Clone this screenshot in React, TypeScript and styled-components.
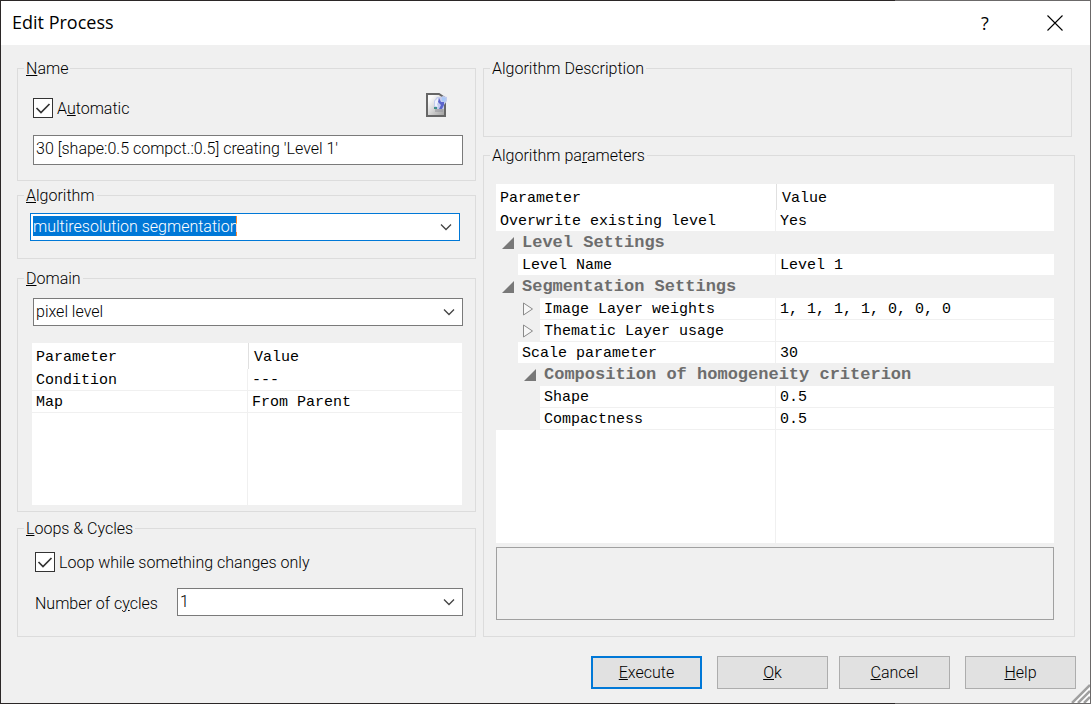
import React, { useState } from "react";
import styled, { createGlobalStyle } from "styled-components";

const GlobalStyle = createGlobalStyle`
  * { box-sizing: border-box; }
  body {
    margin: 0;
    background: #f0f0f0;
    color: #000;
    font: 300 16px/20px Roboto, "Liberation Sans", sans-serif;
  }
`;

const Frame = styled.div`
  min-height: 100vh;
  padding: 1px;
  display: flex;
  background: linear-gradient(90deg, #2b2727 82%, #6b6969 82%);
`;

const Dialog = styled.main`
  flex: 1;
  min-width: 0;
  display: flex;
  flex-direction: column;
  position: relative;
  background: #f0f0f0;
`;

const TitleBar = styled.header`
  display: flex;
  align-items: center;
  height: 44px;
  padding-left: 11px;
  background: #fff;
`;

const Title = styled.h1`
  flex: 1;
  margin: 0;
  padding-bottom: 2px;
  font: 400 18px/24px "Open Sans", "Noto Sans", sans-serif;
`;

const CaptionButton = styled.button`
  display: flex;
  align-items: center;
  justify-content: center;
  width: 70px;
  height: 44px;
  padding: 0 0 1px;
  border: 0;
  background: transparent;
  color: #000;
  font: 400 18px/24px "Open Sans", "Noto Sans", sans-serif;
`;

const Columns = styled.div`
  flex: 1;
  display: grid;
  grid-template-columns: 459fr 592fr;
  gap: 7px;
  padding: 13px 15px 0 16px;
`;

const Column = styled.div`
  min-width: 0;
  display: flex;
  flex-direction: column;
`;

const Group = styled.fieldset<{ $gap?: number; $inset?: number }>`
  min-width: 0;
  margin: 0 ${(p) => p.$inset ?? 0}px ${(p) => p.$gap ?? 0}px 0;
  padding: 0;
  border: 1px solid #dcdcdc;
`;

const Legend = styled.legend`
  height: 20px;
  margin-left: 6px;
  padding: 0 2px;
  line-height: 22px;
`;

const GroupBody = styled.div<{ $pad: string }>`
  padding: ${(p) => p.$pad};
`;

const NameRow = styled.div`
  display: flex;
  align-items: flex-end;
  justify-content: space-between;
  height: 25px;
  margin-bottom: 17px;
  padding-right: 15px;
`;

const CheckLabel = styled.label`
  display: flex;
  align-items: center;
  gap: 4px;
`;

const CheckText = styled.span`
  padding-top: 2px;
  line-height: 18px;
`;

const CheckBox = styled.input`
  appearance: none;
  flex: none;
  width: 20px;
  height: 20px;
  margin: 0;
  border: 1px solid #333;
  background: #fff;
  &:checked {
    background: #fff
      url("data:image/svg+xml,%3Csvg xmlns='http://www.w3.org/2000/svg' viewBox='0 0 18 18'%3E%3Cpath d='M2.5 9l4.5 4.5L15.500 5' fill='none' stroke='%23333' stroke-width='1.700'/%3E%3C/svg%3E")
      center / 18px 18px;
  }
`;

const IconButton = styled.button`
  display: flex;
  padding: 0;
  border: 0;
  background: transparent;
`;

const TextBox = styled.input`
  display: block;
  width: 100%;
  height: 30px;
  padding: 0 2px 3px;
  border: 1px solid #7a7a7a;
  border-radius: 0;
  background: #fff;
  color: #000;
  font: inherit;
  outline: 0;
`;

const Combo = styled.div`
  position: relative;
  flex: 1;
  min-width: 0;
`;

const Select = styled.select<{ $active?: boolean }>`
  appearance: none;
  display: block;
  width: 100%;
  height: 28px;
  padding: 0 28px 0 2px;
  border: 1px solid ${(p) => (p.$active ? "#0078d7" : "#7a7a7a")};
  border-radius: 0;
  color: ${(p) => (p.$active ? "#fff" : "#000")};
  background: ${(p) =>
    p.$active
      ? "linear-gradient(90deg, #0078d7 203px, #ff8728 203px) 2px 2px / 204px 20px no-repeat #fff"
      : "#fff"};
  font: inherit;
  outline: 0;
`;

const Chevron = styled.svg`
  position: absolute;
  right: 8px;
  top: 10px;
  pointer-events: none;
`;

const CyclesRow = styled.div`
  display: flex;
  align-items: center;
  margin-top: 16px;
`;

const CyclesLabel = styled.label`
  width: 142px;
  padding-top: 3px;
`;

const DomainTable = styled.div`
  margin: 17px 1px 0 -1px;
`;

const Grid = styled.table`
  width: 100%;
  table-layout: fixed;
  border-collapse: separate;
  border-spacing: 0;
  background: #fff;
  font: 400 15px/22px "Liberation Mono", monospace;
  white-space: nowrap;
`;

const NameCol = styled.col<{ $width: number }>`
  width: ${(p) => p.$width}px;
`;

const HeadCell = styled.th`
  height: 26px;
  padding: 4px 0 0 4px;
  font-weight: 400;
  text-align: left;
  & + & {
    padding-left: 5px;
    border-left: 1px solid #e0e0e0;
  }
`;

const Cell = styled.td<{ $indent?: number }>`
  height: 22px;
  padding: 0 0 0 ${(p) => (p.$indent ?? 0) * 22}px;
  background: #f0f0f0;
  border-bottom: 1px solid #f0f0f0;
  position: relative;
`;

const CellText = styled.div<{ $first?: boolean }>`
  height: 21px;
  padding-left: 4px;
  background: #fff;
  border-right: ${(p) => (p.$first ? "1px solid #f0f0f0" : "0")};
  line-height: 23px;
`;

const GroupCell = styled.td<{ $indent: number }>`
  height: 22px;
  padding: 0 0 0 ${(p) => p.$indent * 22 + 6}px;
  background: #f0f0f0;
  color: #6d6d6d;
  font-size: 17px;
  font-weight: 700;
`;

const GroupLine = styled.div`
  display: flex;
  align-items: center;
  gap: 8px;
`;

const Arrow = styled.svg`
  position: absolute;
  left: 27px;
  top: 4px;
`;

const FillCell = styled.td<{ $height: number; $first?: boolean }>`
  height: ${(p) => p.$height}px;
  padding: 0;
  border-right: ${(p) => (p.$first ? "1px solid #f0f0f0" : "0")};
`;

const InfoBox = styled.div`
  height: 73px;
  margin-top: 4px;
  border: 1px solid #a0a0a0;
`;

const Footer = styled.footer`
  display: flex;
  justify-content: flex-end;
  gap: 15px;
  padding: 18px 14px 14px;
`;

const ButtonPair = styled.div`
  display: flex;
  gap: 11px;
`;

const Button = styled.button<{ $primary?: boolean }>`
  width: 111px;
  height: 33px;
  padding: 1px 0 0;
  border: ${(p) => (p.$primary ? "2px solid #0078d7" : "1px solid #adadad")};
  border-radius: 0;
  background: #e1e1e1;
  color: #000;
  font: inherit;
`;

const Grip = styled.svg`
  position: absolute;
  right: 0;
  bottom: 0;
`;

interface ComboBoxProps {
  value: string;
  label: string;
  id?: string;
  active?: boolean;
}

function ComboBox({ value, label, id, active }: ComboBoxProps) {
  return (
    <Combo>
      <Select id={id} aria-label={label} defaultValue={value} $active={active}>
        <option value={value}>{value}</option>
      </Select>
      <Chevron width="12" height="8" viewBox="0 0 12 8">
        <path d="M1 1.500l5 5 5-5" fill="none" stroke="#444" strokeWidth="1.300" />
      </Chevron>
    </Combo>
  );
}

interface ParamRow {
  name: string;
  value?: string;
  indent?: number;
  group?: boolean;
  arrow?: boolean;
}

interface ParamTableProps {
  rows: ParamRow[];
  nameWidth: number;
  fill: number;
}

function ParamTable({ rows, nameWidth, fill }: ParamTableProps) {
  return (
    <Grid>
      <colgroup>
        <NameCol $width={nameWidth} />
        <col />
      </colgroup>
      <thead>
        <tr>
          <HeadCell>Parameter</HeadCell>
          <HeadCell>Value</HeadCell>
        </tr>
      </thead>
      <tbody>
        {rows.map((row) =>
          row.group ? (
            <tr key={row.name}>
              <GroupCell colSpan={2} $indent={row.indent ?? 0}>
                <GroupLine>
                  <svg width="12" height="12" viewBox="0 0 12 12">
                    <path d="M12 0v12H0z" fill="#787878" />
                  </svg>
                  {row.name}
                </GroupLine>
              </GroupCell>
            </tr>
          ) : (
            <tr key={row.name}>
              <Cell $indent={row.indent}>
                {row.arrow && (
                  <Arrow width="11" height="14" viewBox="0 0 11 14">
                    <path d="M.5 1v12L9.500 7z" fill="#f7f7f7" stroke="#8a8a8a" />
                  </Arrow>
                )}
                <CellText $first>{row.name}</CellText>
              </Cell>
              <Cell>
                <CellText>{row.value}</CellText>
              </Cell>
            </tr>
          )
        )}
        <tr>
          <FillCell $height={fill} $first />
          <FillCell $height={fill} />
        </tr>
      </tbody>
    </Grid>
  );
}

const domainRows: ParamRow[] = [
  { name: "Condition", value: "---" },
  { name: "Map", value: "From Parent" },
];

const algorithmRows: ParamRow[] = [
  { name: "Overwrite existing level", value: "Yes" },
  { name: "Level Settings", group: true },
  { name: "Level Name", value: "Level 1", indent: 1 },
  { name: "Segmentation Settings", group: true },
  { name: "Image Layer weights", value: "1, 1, 1, 1, 0, 0, 0", indent: 2, arrow: true },
  { name: "Thematic Layer usage", value: "", indent: 2, arrow: true },
  { name: "Scale parameter", value: "30", indent: 1 },
  { name: "Composition of homogeneity criterion", group: true, indent: 1 },
  { name: "Shape", value: "0.5", indent: 2 },
  { name: "Compactness", value: "0.5", indent: 2 },
];

function CommentIcon() {
  return (
    <svg width="22" height="25" viewBox="0 0 22 25">
      <defs>
        <linearGradient id="paper" x1="0" y1="0" x2="1" y2="1">
          <stop offset="0.2" stopColor="#fafafa" />
          <stop offset="1" stopColor="#9c9c9c" />
        </linearGradient>
      </defs>
      <path d="M1 1h12l6 4v18H1z" fill="url(#paper)" stroke="#666" strokeWidth="2" />
      <path d="M9 16h8v3H9z" fill="#8f8f98" opacity="0.5" />
      <path d="M8 8l3-4h4l2-1 4 1v4l-3 4v4h-7l-3-1z" fill="#c3cbee" />
      <path d="M9 8l3-3 1 3-2 3 1 3-3-1z" fill="#eef1fc" />
      <path d="M13 5l2 4h3v3l-2 4h-3l2-4-3-3z" fill="#5b64cc" />
      <path d="M16 4l4 1-1 4-3-1z" fill="#a9c9f7" />
      <path d="M8 14h3v2H8z" fill="#3f8f8a" />
    </svg>
  );
}

export default function App() {
  const [name, setName] = useState("30 [shape:0.5 compct.:0.5] creating 'Level 1'");

  return (
    <>
      <GlobalStyle />
      <Frame>
        <Dialog>
          <TitleBar>
            <Title>Edit Process</Title>
            <CaptionButton type="button" aria-label="Context help">?</CaptionButton>
            <CaptionButton type="button" aria-label="Close">
              <svg width="16" height="16" viewBox="0 0 16 16">
                <path d="M.5.5l15 15M15.500.5l-15 15" stroke="#000" strokeWidth="1.100" />
              </svg>
            </CaptionButton>
          </TitleBar>
          <Columns>
            <Column>
              <Group $gap={4}>
                <Legend><u>N</u>ame</Legend>
                <GroupBody $pad="15px 12px 15px 15px">
                  <NameRow>
                    <CheckLabel>
                      <CheckBox type="checkbox" defaultChecked />
                      <CheckText>A<u>u</u>tomatic</CheckText>
                    </CheckLabel>
                    <IconButton type="button" aria-label="Edit comment">
                      <CommentIcon />
                    </IconButton>
                  </NameRow>
                  <TextBox
                    type="text"
                    aria-label="Name"
                    value={name}
                    onChange={(e) => setName(e.target.value)}
                  />
                </GroupBody>
              </Group>
              <Group $gap={9}>
                <Legend><u>A</u>lgorithm</Legend>
                <GroupBody $pad="8px 15px 17px 12px">
                  <ComboBox label="Algorithm" value="multiresolution segmentation" active />
                </GroupBody>
              </Group>
              <Group $gap={6}>
                <Legend><u>D</u>omain</Legend>
                <GroupBody $pad="10px 12px 6px 15px">
                  <ComboBox label="Domain" value="pixel level" />
                  <DomainTable>
                    <ParamTable rows={domainRows} nameWidth={216} fill={92} />
                  </DomainTable>
                </GroupBody>
              </Group>
              <Group>
                <Legend><u>L</u>oops &amp; Cycles</Legend>
                <GroupBody $pad="14px 12px 20px 17px">
                  <CheckLabel>
                    <CheckBox type="checkbox" defaultChecked />
                    <CheckText>Loop while something changes only</CheckText>
                  </CheckLabel>
                  <CyclesRow>
                    <CyclesLabel htmlFor="cycles">Number of c<u>y</u>cles</CyclesLabel>
                    <ComboBox id="cycles" label="Number of cycles" value="1" />
                  </CyclesRow>
                </GroupBody>
              </Group>
            </Column>
            <Column>
              <Group $gap={8} $inset={3}>
                <Legend>Algorithm Description</Legend>
                <GroupBody $pad="58px 0 0" />
              </Group>
              <Group>
                <Legend>Algorithm pa<u>r</u>ameters</Legend>
                <GroupBody $pad="19px 20px 16px 12px">
                  <ParamTable rows={algorithmRows} nameWidth={280} fill={113} />
                  <InfoBox />
                </GroupBody>
              </Group>
            </Column>
          </Columns>
          <Footer>
            <Button type="submit" $primary><u>E</u>xecute</Button>
            <ButtonPair>
              <Button type="button"><u>O</u>k</Button>
              <Button type="button"><u>C</u>ancel</Button>
            </ButtonPair>
            <Button type="button"><u>H</u>elp</Button>
          </Footer>
          <Grip width="20" height="20" viewBox="0 0 20 20">
            <path d="M0 20L20 0v20z" fill="#fff" />
            <path d="M2 20L20 2M8 20L20 8M14 20l6-6" stroke="#a0a0a0" strokeWidth="2.500" />
          </Grip>
        </Dialog>
      </Frame>
    </>
  );
}
